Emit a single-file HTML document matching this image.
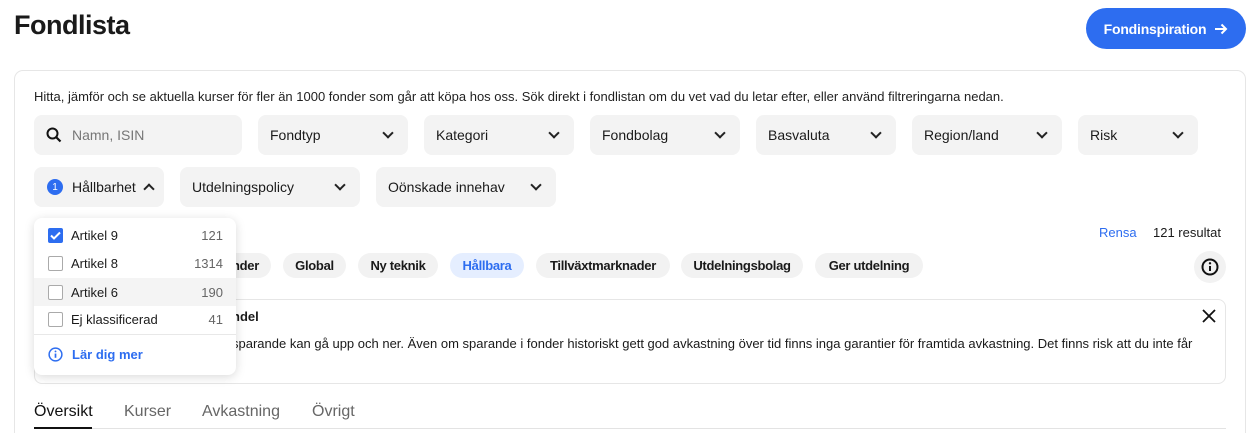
<!DOCTYPE html>
<html><head><meta charset="utf-8"><style>
*{box-sizing:border-box;margin:0;padding:0}
html,body{width:1260px;height:433px;overflow:hidden}
body{background:#fff;font-family:"Liberation Sans",Arial,sans-serif;color:#1a1a1a;position:relative}
.a{position:absolute}
h1{position:absolute;left:14px;top:10px;font-size:27px;font-weight:700;letter-spacing:-0.5px}
.btn{left:1086px;top:8px;width:160px;height:41px;border-radius:21px;background:#2d6df0;color:#fff;font-size:14px;font-weight:700;display:flex;align-items:center;justify-content:center;gap:8px;letter-spacing:-0.2px}
.card{left:14px;top:70px;width:1232px;height:363px;border:1px solid #e6e6e6;border-bottom:none;border-radius:9px 9px 0 0}
.intro{left:34px;top:89px;font-size:13px;color:#222}
.sel{height:40px;background:#f3f3f3;border-radius:8px;font-size:14px;display:flex;align-items:center;padding:0 12px;justify-content:space-between}
.chev{width:8px;height:8px;border-right:2px solid #222;border-bottom:2px solid #222;transform:rotate(45deg);margin-top:-4px;margin-right:4px;flex-shrink:0}
.chip{top:253px;height:25px;border-radius:13px;background:#f2f2f2;font-size:13px;font-weight:700;display:flex;align-items:center;justify-content:center;letter-spacing:-0.3px;white-space:nowrap;overflow:hidden}
.dd{left:34px;top:218px;width:202px;height:157px;background:#fff;border-radius:8px;box-shadow:0 2px 10px rgba(0,0,0,.15)}
.row{position:absolute;left:0;width:202px;height:28px;display:flex;align-items:center;font-size:13px;padding:0 13px 0 14px}
.cb{width:15px;height:15px;border:1px solid #aaa;border-radius:2px;margin-right:8px;background:#fff;flex-shrink:0}
.row .n{margin-left:auto;color:#666}
.tab{top:403px;font-size:16px;color:#666}
</style></head><body>
<h1>Fondlista</h1>
<div class="a btn">Fondinspiration <svg width="14" height="12" viewBox="0 0 14 12"><path d="M1 6h11M7.5 1.5L12 6l-4.5 4.5" fill="none" stroke="#fff" stroke-width="2"/></svg></div>
<div class="a card"></div>
<div class="a intro">Hitta, jämför och se aktuella kurser för fler än 1000 fonder som går att köpa hos oss. Sök direkt i fondlistan om du vet vad du letar efter, eller använd filtreringarna nedan.</div>
<div class="a sel" style="left:34px;top:115px;width:208px;justify-content:flex-start;gap:10px"><svg width="16" height="16" viewBox="0 0 16 16"><circle cx="6.5" cy="6.5" r="5" fill="none" stroke="#111" stroke-width="2"/><path d="M10 10l4.5 4.5" stroke="#111" stroke-width="2.2"/></svg><span style="color:#777">Namn, ISIN</span></div>
<div class="a sel" style="left:258px;top:115px;width:150px">Fondtyp<i class="chev"></i></div>
<div class="a sel" style="left:424px;top:115px;width:150px">Kategori<i class="chev"></i></div>
<div class="a sel" style="left:590px;top:115px;width:150px">Fondbolag<i class="chev"></i></div>
<div class="a sel" style="left:756px;top:115px;width:140px">Basvaluta<i class="chev"></i></div>
<div class="a sel" style="left:912px;top:115px;width:150px">Region/land<i class="chev"></i></div>
<div class="a sel" style="left:1078px;top:115px;width:120px">Risk<i class="chev"></i></div>
<div class="a sel" style="left:34px;top:167px;width:130px;justify-content:flex-start;gap:9px;padding-left:13px"><span style="flex-shrink:0;width:16px;height:16px;border-radius:50%;background:#2d6df0;color:#fff;font-size:10px;display:flex;align-items:center;justify-content:center">1</span>Hållbarhet<i class="chev" style="transform:rotate(225deg);margin-top:4px;margin-left:0"></i></div>
<div class="a sel" style="left:180px;top:167px;width:180px">Utdelningspolicy<i class="chev"></i></div>
<div class="a sel" style="left:376px;top:167px;width:180px">Oönskade innehav<i class="chev"></i></div>
<div class="a" style="left:1099px;top:225px;font-size:13px;color:#2d6df0">Rensa</div>
<div class="a" style="left:1153px;top:225px;font-size:13px">121 resultat</div>
<div class="a chip" style="left:200px;width:71px;justify-content:flex-end;padding-right:12px">nder</div>
<div class="a chip" style="left:283px;width:63px">Global</div>
<div class="a chip" style="left:358px;width:80px">Ny teknik</div>
<div class="a chip" style="left:450px;width:74px;background:#e5eeff;color:#2d6df0">Hållbara</div>
<div class="a chip" style="left:536px;width:134px">Tillväxtmarknader</div>
<div class="a chip" style="left:681px;width:122px">Utdelningsbolag</div>
<div class="a chip" style="left:815px;width:108px">Ger utdelning</div>
<div class="a" style="left:1194px;top:251px;width:32px;height:32px;border-radius:50%;background:#f2f2f2;display:flex;align-items:center;justify-content:center"><svg width="18" height="18" viewBox="0 0 18 18"><circle cx="9" cy="9" r="7.5" fill="none" stroke="#111" stroke-width="2"/><path d="M9 8v5" stroke="#111" stroke-width="2"/><circle cx="9" cy="5.3" r="1.2" fill="#111"/></svg></div>
<div class="a" style="left:34px;top:299px;width:1192px;height:85px;border:1px solid #e6e6e6;border-radius:8px"></div>
<div class="a" style="left:115px;top:309px;font-size:13px;font-weight:700">Risker med fondhandel</div>
<div class="a" style="left:48px;top:333px;font-size:13px;width:1162px;line-height:22px"><span style="display:inline-block;width:184px"></span>sparande kan gå upp och ner. Även om sparande i fonder historiskt gett god avkastning över tid finns inga garantier för framtida avkastning. Det finns risk att du inte får tillbaka hela beloppet.</div>
<svg class="a" style="left:1201px;top:308px" width="16" height="16" viewBox="0 0 16 16"><path d="M2 2l12 12M14 2L2 14" stroke="#111" stroke-width="1.8"/></svg>
<div class="a tab" style="left:34px;color:#111">Översikt</div>
<div class="a tab" style="left:124px">Kurser</div>
<div class="a tab" style="left:202px">Avkastning</div>
<div class="a tab" style="left:312px">Övrigt</div>
<div class="a" style="left:34px;top:428px;width:1192px;height:1px;background:#e3e3e3"></div>
<div class="a" style="left:34px;top:427px;width:58px;height:2px;background:#111"></div>
<div class="a dd">
<div class="row" style="top:3px"><span class="cb" style="background:#2d6df0;border-color:#2d6df0;display:flex;align-items:center;justify-content:center"><svg width="11" height="9" viewBox="0 0 11 9"><path d="M1 4.5l3 3 6-6" fill="none" stroke="#fff" stroke-width="2"/></svg></span>Artikel 9<span class="n">121</span></div>
<div class="row" style="top:31px"><span class="cb"></span>Artikel 8<span class="n">1314</span></div>
<div class="row" style="top:60px;background:#f4f4f4"><span class="cb"></span>Artikel 6<span class="n">190</span></div>
<div class="row" style="top:87px"><span class="cb"></span>Ej klassificerad<span class="n">41</span></div>
<div class="a" style="left:0;top:116px;width:202px;height:1px;background:#e8e8e8"></div>
<div class="row" style="top:122px;color:#2d6df0;font-weight:700"><svg width="15" height="15" viewBox="0 0 16 16" style="margin-right:9px"><circle cx="8" cy="8" r="6.8" fill="none" stroke="#2d6df0" stroke-width="1.6"/><path d="M8 7v4.5" stroke="#2d6df0" stroke-width="1.8"/><circle cx="8" cy="4.7" r="1" fill="#2d6df0"/></svg>Lär dig mer</div>
</div>
</body></html>
